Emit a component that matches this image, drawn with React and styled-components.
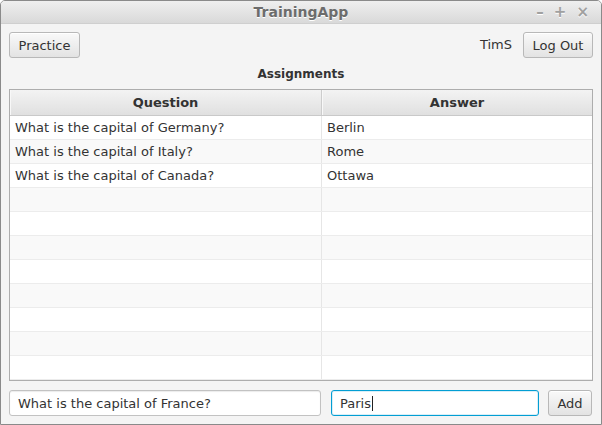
import React from "react";
import styled, { createGlobalStyle } from "styled-components";

const GlobalStyle = createGlobalStyle`
  html, body {
    margin: 0;
    padding: 0;
    background: #ffffff;
  }
  * {
    box-sizing: border-box;
  }
`;

const Window = styled.div`
  width: 602px;
  height: 425px;
  border: 1px solid #8a8a8a;
  border-radius: 5px 5px 0 0;
  background: #f4f4f4;
  display: flex;
  flex-direction: column;
  overflow: hidden;
  font-family: "DejaVu Sans", "Liberation Sans", sans-serif;
  font-size: 13px;
  color: #333333;
`;

const TitleBar = styled.div`
  height: 23px;
  flex: none;
  position: relative;
  display: flex;
  align-items: center;
  justify-content: center;
  background: linear-gradient(#efefef, #d9d9d9);
  border-bottom: 1px solid #cfcfcf;
`;

const Title = styled.span`
  font-weight: bold;
  font-size: 14px;
  color: #6c6c6c;
  text-shadow: 0 1px 0 #ffffff;
`;

const Controls = styled.div`
  position: absolute;
  right: 12px;
  top: 0;
  height: 100%;
  display: flex;
  align-items: center;
  gap: 10px;
  color: #a0a0a0;
  font-weight: bold;
  font-size: 15px;
  text-shadow: 0 1px 0 #ffffff;
`;

const Content = styled.div`
  flex: 1;
  display: flex;
  flex-direction: column;
  padding: 8px 8px 8px 8px;
`;

const TopRow = styled.div`
  display: flex;
  align-items: center;
  height: 26px;
`;

const Spacer = styled.div`
  flex: 1;
`;

const Button = styled.button`
  height: 26px;
  width: ${(p) => p.$w}px;
  padding: 0;
  border: 1px solid #b8b8b8;
  border-radius: 3px;
  background: linear-gradient(#f9f9f9, #e3e3e3);
  box-shadow: inset 0 1px 0 #ffffff;
  font-family: inherit;
  font-size: 13px;
  color: #333333;
  flex: none;
`;

const UserName = styled.span`
  margin-right: 11px;
  margin-top: -2px;
`;

const SectionLabel = styled.div`
  height: 31px;
  display: flex;
  align-items: center;
  justify-content: center;
  font-weight: bold;
  font-size: 12px;
  padding-top: 1px;
`;

const Table = styled.div`
  height: 292px;
  border: 1px solid #adadad;
  background: #ffffff;
  display: flex;
  flex-direction: column;
  overflow: hidden;
`;

const Cols = `
  display: grid;
  grid-template-columns: 312px 1fr;
`;

const HeaderRow = styled.div`
  ${Cols}
  height: 26px;
  flex: none;
  background: linear-gradient(#f3f3f3, #e0e0e0);
  border-bottom: 1px solid #c9c9c9;
`;

const HeaderCell = styled.div`
  display: flex;
  align-items: center;
  justify-content: center;
  font-weight: bold;
  border-right: ${(p) => (p.$last ? "none" : "1px solid #cdcdcd")};
  box-shadow: inset 1px 0 0 #f8f8f8;
`;

const Row = styled.div`
  ${Cols}
  height: 24px;
  flex: none;
  background: ${(p) => (p.$alt ? "#f9f9f9" : "#ffffff")};
  border-bottom: 1px solid #ececec;
`;

const Cell = styled.div`
  display: flex;
  align-items: center;
  padding-left: 5px;
  border-right: ${(p) => (p.$last ? "none" : "1px solid #e6e6e6")};
`;

const BottomRow = styled.div`
  display: flex;
  align-items: center;
  margin-top: 9px;
  height: 26px;
`;

const Field = styled.div`
  height: 26px;
  width: ${(p) => p.$w}px;
  flex: none;
  display: flex;
  align-items: center;
  padding-left: 8px;
  background: #ffffff;
  border: 1px solid ${(p) => (p.$focused ? "#039ed3" : "#c2c2c2")};
  border-radius: 3px;
  box-shadow: ${(p) =>
    p.$focused ? "inset 0 0 0 1px #d9eff8" : "inset 0 1px 1px #ececec"};
  margin-right: ${(p) => p.$gap}px;
`;

const Caret = styled.span`
  display: inline-block;
  width: 1px;
  height: 15px;
  background: #222222;
  margin-left: 1px;
`;

const rows = [
  { q: "What is the capital of Germany?", a: "Berlin" },
  { q: "What is the capital of Italy?", a: "Rome" },
  { q: "What is the capital of Canada?", a: "Ottawa" },
];

const TOTAL_ROWS = 11;

export default function App() {
  const filled = Array.from({ length: TOTAL_ROWS }, (_, i) => rows[i] || null);

  return (
    <>
      <GlobalStyle />
      <Window>
        <TitleBar>
          <Title>TrainingApp</Title>
          <Controls>
            <span>–</span>
            <span>+</span>
            <span>×</span>
          </Controls>
        </TitleBar>
        <Content>
          <TopRow>
            <Button $w={71}>Practice</Button>
            <Spacer />
            <UserName>TimS</UserName>
            <Button $w={70}>Log Out</Button>
          </TopRow>
          <SectionLabel>Assignments</SectionLabel>
          <Table>
            <HeaderRow>
              <HeaderCell>Question</HeaderCell>
              <HeaderCell $last>Answer</HeaderCell>
            </HeaderRow>
            {filled.map((r, i) => (
              <Row key={i} $alt={i % 2 === 1}>
                <Cell>{r ? r.q : ""}</Cell>
                <Cell $last>{r ? r.a : ""}</Cell>
              </Row>
            ))}
          </Table>
          <BottomRow>
            <Field $w={312} $gap={10}>
              What is the capital of France?
            </Field>
            <Field $w={208} $gap={9} $focused>
              Paris
              <Caret />
            </Field>
            <Button $w={44}>Add</Button>
          </BottomRow>
        </Content>
      </Window>
    </>
  );
}
